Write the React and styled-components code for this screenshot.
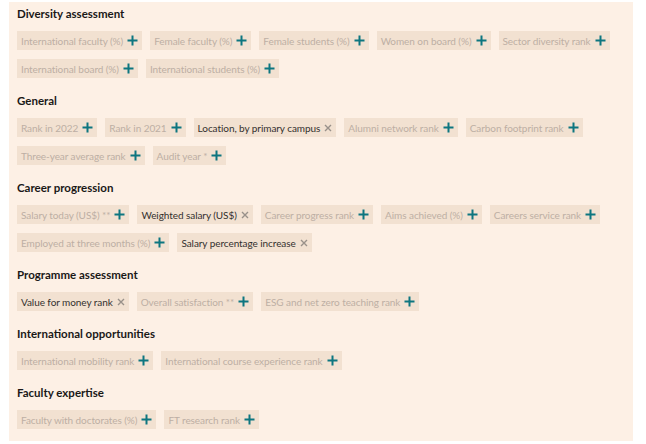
import React from "react";
import styled, { createGlobalStyle } from "styled-components";

const GlobalStyle = createGlobalStyle`
  html, body {
    margin: 0;
    padding: 0;
    background: #ffffff;
  }
  body {
    font-family: "Lato", "Open Sans", sans-serif;
  }
`;

// data for the filter groups
const groups = [
  {
    title: "Diversity assessment",
    items: [
      { label: "International faculty (%)" },
      { label: "Female faculty (%)" },
      { label: "Female students (%)" },
      { label: "Women on board (%)" },
      { label: "Sector diversity rank" },
      { label: "International board (%)" },
      { label: "International students (%)" },
    ],
  },
  {
    title: "General",
    items: [
      { label: "Rank in 2022" },
      { label: "Rank in 2021" },
      { label: "Location, by primary campus", active: true },
      { label: "Alumni network rank" },
      { label: "Carbon footprint rank" },
      { label: "Three-year average rank" },
      { label: "Audit year *" },
    ],
  },
  {
    title: "Career progression",
    items: [
      { label: "Salary today (US$) **" },
      { label: "Weighted salary (US$)", active: true },
      { label: "Career progress rank" },
      { label: "Aims achieved (%)" },
      { label: "Careers service rank" },
      { label: "Employed at three months (%)" },
      { label: "Salary percentage increase", active: true },
    ],
  },
  {
    title: "Programme assessment",
    items: [
      { label: "Value for money rank", active: true },
      { label: "Overall satisfaction **" },
      { label: "ESG and net zero teaching rank" },
    ],
  },
  {
    title: "International opportunities",
    items: [
      { label: "International mobility rank" },
      { label: "International course experience rank" },
    ],
  },
  {
    title: "Faculty expertise",
    items: [
      { label: "Faculty with doctorates (%)" },
      { label: "FT research rank" },
    ],
  },
];

const PlusIcon = () => (
  <svg width="11" height="11" viewBox="0 0 11 11">
    <path d="M5.5 0.5v10M0.5 5.5h10" stroke="#0d7680" strokeWidth="2" fill="none" />
  </svg>
);

const CloseIcon = () => (
  <svg width="8" height="8" viewBox="0 0 8 8">
    <path d="M1 1l6 6M7 1l-6 6" stroke="#99918a" strokeWidth="1.4" fill="none" />
  </svg>
);

export default function App() {
  return (
    <>
      <GlobalStyle />
      <Page>
        <Panel>
          {groups.map((group) => (
            <Section key={group.title}>
              <Heading>{group.title}</Heading>
              <ChipList>
                {group.items.map((item) => (
                  <Chip key={item.label} $active={item.active}>
                    <span>{item.label}</span>
                    {item.active ? <CloseIcon /> : <PlusIcon />}
                  </Chip>
                ))}
              </ChipList>
            </Section>
          ))}
        </Panel>
      </Page>
    </>
  );
}

//css
const Page = styled.div`
  padding: 2px 0 0 9px;
  width: 646px;
  height: 444px;
  box-sizing: border-box;
`;

const Panel = styled.div`
  width: 624px;
  height: 439px;
  box-sizing: border-box;
  background-color: #fdf0e5;
  padding: 4px 8px 0 8px;
  display: flex;
  flex-direction: column;
  gap: 15px;
`;

const Section = styled.div`
  display: flex;
  flex-direction: column;
  gap: 9px;
`;

const Heading = styled.h3`
  margin: 0;
  font-size: 11.5px;
  line-height: 16px;
  font-weight: 700;
  color: #1a1817;
`;

const ChipList = styled.div`
  display: flex;
  flex-wrap: wrap;
  gap: 9px 8px;
`;

const Chip = styled.div`
  display: flex;
  align-items: center;
  gap: 4px;
  height: 19px;
  padding: 0 4px;
  box-sizing: border-box;
  background-color: #f2e1d1;
  font-size: 10px;
  letter-spacing: -0.07px;
  color: ${(p) => (p.$active ? "#33302e" : "#bdafa4")};
  white-space: nowrap;
  svg {
    flex-shrink: 0;
  }
`;
